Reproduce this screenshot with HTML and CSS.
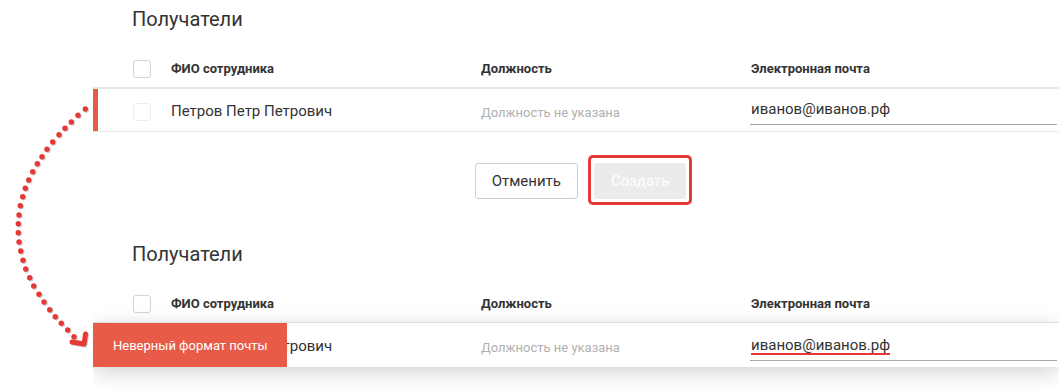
FILE: index.html
```html
<!DOCTYPE html>
<html lang="ru">
<head>
<meta charset="utf-8">
<title>Получатели</title>
<link rel="stylesheet" href="styles.css">
</head>
<body>
<main class="page">
  <section class="block">
    <h2 class="block__title">Получатели</h2>
    <div class="table">
      <div class="table__head">
        <span class="check"></span>
        <span class="th">ФИО сотрудника</span>
        <span class="th">Должность</span>
        <span class="th">Электронная почта</span>
      </div>
      <div class="table__row table__row--marked">
        <span class="check check--disabled"></span>
        <span class="cell-name">Петров Петр Петрович</span>
        <span class="cell-muted">Должность не указана</span>
        <div class="field"><span class="field__value">иванов@иванов.рф</span></div>
      </div>
    </div>
    <div class="actions">
      <button class="btn btn--secondary">Отменить</button>
      <div class="highlight"><button class="btn btn--disabled">Создать</button></div>
    </div>
  </section>

  <section class="block">
    <h2 class="block__title">Получатели</h2>
    <div class="table table--clip">
      <div class="table__head">
        <span class="check"></span>
        <span class="th">ФИО сотрудника</span>
        <span class="th">Должность</span>
        <span class="th">Электронная почта</span>
      </div>
      <div class="table__row table__row--raised">
        <span class="check check--disabled"></span>
        <span class="cell-name">Петров Петр Петрович</span>
        <span class="cell-muted">Должность не указана</span>
        <div class="field"><span class="field__value field__value--error">иванов@иванов.рф</span></div>
        <div class="toast">Неверный формат почты</div>
      </div>
    </div>
  </section>

  <svg class="arrow" width="100" height="360" viewBox="0 0 100 360" aria-hidden="true">
    <g fill="#e53935">
      <circle cx="85.3" cy="109" r="2.7"/>
      <circle cx="78" cy="115.3" r="2.7"/>
      <circle cx="71.3" cy="122" r="2.7"/>
      <circle cx="65" cy="128.3" r="2.7"/>
      <circle cx="59" cy="134.7" r="2.7"/>
      <circle cx="52.7" cy="142" r="2.7"/>
      <circle cx="47" cy="149.3" r="2.7"/>
      <circle cx="42" cy="156.7" r="2.7"/>
      <circle cx="37.3" cy="163.7" r="2.7"/>
      <circle cx="32.7" cy="171.7" r="2.7"/>
      <circle cx="28.7" cy="180" r="2.7"/>
      <circle cx="25.3" cy="188.3" r="2.7"/>
      <circle cx="22.7" cy="196.7" r="2.7"/>
      <circle cx="20.3" cy="205.7" r="2.7"/>
      <circle cx="19" cy="215" r="2.7"/>
      <circle cx="18.3" cy="223.7" r="2.7"/>
      <circle cx="18.3" cy="232.7" r="2.7"/>
      <circle cx="19" cy="242" r="2.7"/>
      <circle cx="20.7" cy="251" r="2.7"/>
      <circle cx="23" cy="260.3" r="2.7"/>
      <circle cx="25.7" cy="269" r="2.7"/>
      <circle cx="29.7" cy="277.7" r="2.7"/>
      <circle cx="33.7" cy="286" r="2.7"/>
      <circle cx="39" cy="294.3" r="2.7"/>
      <circle cx="44" cy="302" r="2.7"/>
      <circle cx="49.7" cy="309.7" r="2.7"/>
      <circle cx="55.3" cy="316.7" r="2.7"/>
      <circle cx="61.3" cy="323.3" r="2.7"/>
      <circle cx="67.7" cy="330" r="2.7"/>
      <circle cx="74" cy="336.7" r="2.7"/>
    </g>
    <polyline points="72,342 84,344 85.5,334" fill="none" stroke="#e53935" stroke-width="5" stroke-linecap="round" stroke-linejoin="round"/>
  </svg>
</main>
</body>
</html>
```

FILE: styles.css
```css
* { box-sizing: border-box; }

body {
  margin: 0;
  background: #fff;
  color: #333;
  font-family: Roboto, "Liberation Sans", Arial, sans-serif;
}

.page {
  position: relative;
  width: 1059px;
  height: 389px;
  overflow: hidden;
}

.block {
  padding: 7px 0 0 93px;
}

.block__title {
  margin: 0 0 19px;
  padding-left: 39px;
  font-size: 20px;
  line-height: 24px;
  font-weight: 400;
  color: #333;
}

.table--clip {
  overflow: hidden;
  padding-bottom: 40px;
}

.table__head,
.table__row {
  display: grid;
  grid-template-columns: 38px 310px 270px 1fr;
  align-items: center;
  padding: 0 2px 0 40px;
}

.table__head {
  height: 37px;
}

.th {
  font-size: 13px;
  font-weight: 700;
  color: #333;
}

.table__row {
  height: 45px;
  border-top: 2px solid #e8e8e8;
  border-bottom: 1px solid #e8e8e8;
  background: #fff;
}

.table__row--marked {
  box-shadow: inset 5px 0 0 #e55a47;
}

.table__row--raised {
  position: relative;
  z-index: 1;
  height: 45px;
  border-top: 1px solid #dedede;
  border-bottom: 0;
  box-shadow: 0 8px 22px rgba(0, 0, 0, 0.13), 0 0 18px rgba(0, 0, 0, 0.06);
}

.check {
  display: block;
  width: 18px;
  height: 18px;
  border: 1px solid #d4d4d4;
  border-radius: 3px;
  background: #fff;
}

.check--disabled {
  border-color: #ececec;
  margin-top: 4px;
}

.cell-name {
  font-size: 15px;
  line-height: 18px;
  margin-top: 2px;
  color: #333;
}

.cell-muted {
  font-size: 13px;
  line-height: 16px;
  margin-top: 6px;
  color: #b0b0b0;
}

.field {
  margin-top: 4px;
  padding: 0 0 5px 1px;
  border-bottom: 1px solid #a8a8a8;
  font-size: 15px;
  line-height: 20px;
  color: #333;
  margin-left: -1px;
}

.table__row--raised .field {
  margin-top: 6px;
}

.field__value {
  display: inline-block;
}

.field__value--error {
  background: linear-gradient(#e53935, #e53935) no-repeat 0 18px / 100% 3px;
}

.toast {
  position: absolute;
  left: 0;
  top: 0;
  bottom: 0;
  width: 194px;
  display: flex;
  align-items: center;
  padding-left: 20px;
  background: #e85b48;
  color: #fff;
  font-size: 13px;
}

.actions {
  display: flex;
  justify-content: center;
  align-items: flex-start;
  gap: 10px;
  padding: 23px 0 30px 15px;
}

.btn {
  height: 36px;
  font-family: Roboto, "Liberation Sans", Arial, sans-serif;
  font-size: 15px;
  border-radius: 3px;
  cursor: pointer;
}

.btn--secondary {
  margin-top: 8px;
  padding: 0 16px;
  border: 1px solid #cfcfcf;
  background: #fff;
  color: #333;
}

.btn--disabled {
  display: block;
  padding: 0 17px;
  border: 0;
  background: #ebebeb;
  color: #fff;
}

.highlight {
  border: 3px solid #e53935;
  border-radius: 5px;
  padding: 5px 3px 3px;
}

.arrow {
  position: absolute;
  left: 0;
  top: 0;
  z-index: 2;
  filter: drop-shadow(1px 1px 0.6px rgba(0, 0, 0, 0.22));
}
```
